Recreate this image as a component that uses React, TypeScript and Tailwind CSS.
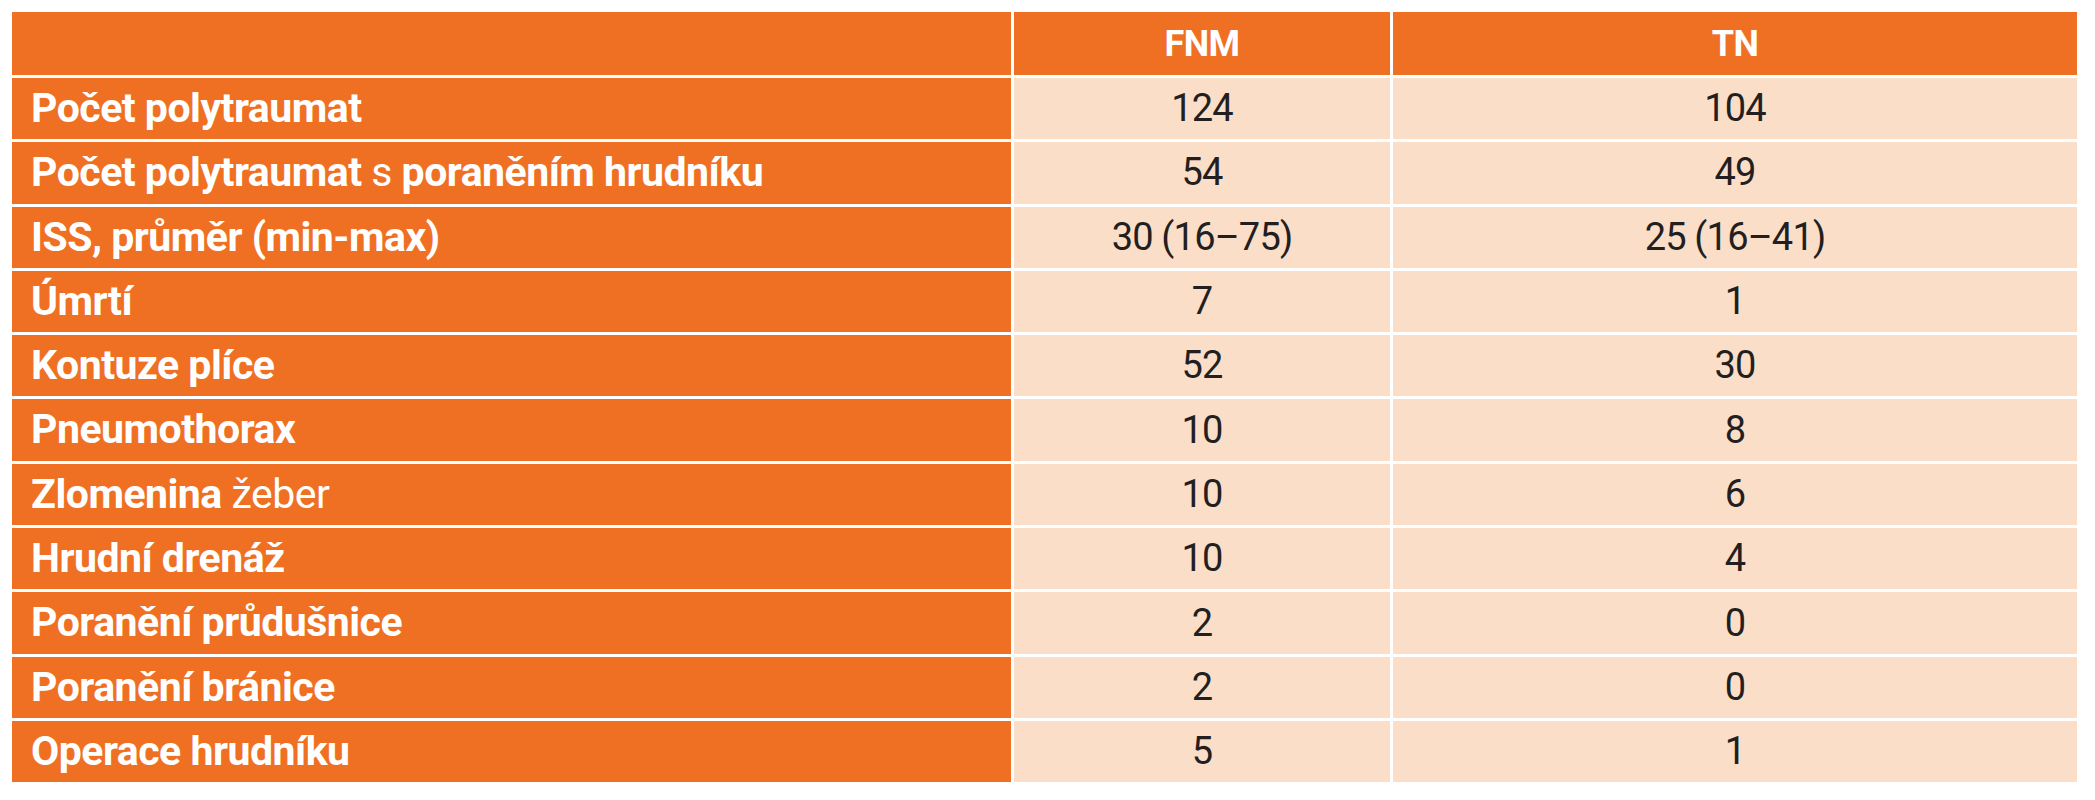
import React from "react";

type Row = { label: React.ReactNode; a: string; b: string };

const rows: Row[] = [
  { label: "Počet polytraumat", a: "124", b: "104" },
  {
    label: (
      <>
        Počet polytraumat <span className="font-normal">s</span> poraněním hrudníku
      </>
    ),
    a: "54",
    b: "49",
  },
  { label: "ISS, průměr (min-max)", a: "30 (16–75)", b: "25 (16–41)" },
  { label: "Úmrtí", a: "7", b: "1" },
  { label: "Kontuze plíce", a: "52", b: "30" },
  { label: "Pneumothorax", a: "10", b: "8" },
  {
    label: (
      <>
        Zlomenina <span className="font-normal">žeber</span>
      </>
    ),
    a: "10",
    b: "6",
  },
  { label: "Hrudní drenáž", a: "10", b: "4" },
  { label: "Poranění průdušnice", a: "2", b: "0" },
  { label: "Poranění bránice", a: "2", b: "0" },
  { label: "Operace hrudníku", a: "5", b: "1" },
];

export default function App() {
  return (
    <div
      className="w-[2095px] h-[800px] bg-white pl-[12px] pt-[12px]"
      style={{ fontFamily: "Roboto, 'Liberation Sans', sans-serif" }}
    >
      <div className="grid grid-cols-[999px_376px_684px] gap-[3px] bg-white">
        <div className="h-[63px] bg-[#f07023]" />
        <div className="h-[63px] bg-[#f07023] flex items-center justify-center text-white font-bold text-[36px] tracking-[-0.5px]">
          FNM
        </div>
        <div className="h-[63px] bg-[#f07023] flex items-center justify-center text-white font-bold text-[36px] tracking-[-0.5px]">
          TN
        </div>
        {rows.map((r, i) => (
          <React.Fragment key={i}>
            <div className="h-[61.3px] bg-[#f07023] flex items-center pl-[19px] text-white font-bold text-[41px] tracking-[-0.5px] whitespace-nowrap">
              <span>{r.label}</span>
            </div>
            <div className="h-[61.3px] bg-[#fbdec8] flex items-center justify-center text-[#231f20] text-[38px] tracking-[-0.8px]">
              {r.a}
            </div>
            <div className="h-[61.3px] bg-[#fbdec8] flex items-center justify-center text-[#231f20] text-[38px] tracking-[-0.8px]">
              {r.b}
            </div>
          </React.Fragment>
        ))}
      </div>
    </div>
  );
}
